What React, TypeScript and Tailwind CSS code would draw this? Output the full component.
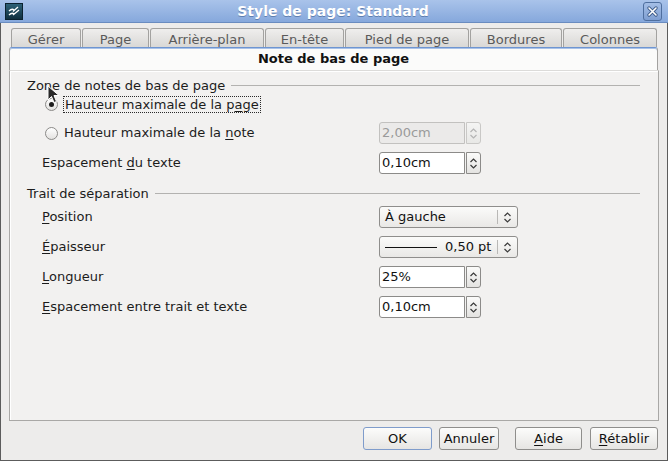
import React from 'react';

const font = "font-['DejaVu_Sans',sans-serif]";

const tabs = [
  { label: 'Gérer', w: 'w-[70px]' },
  { label: 'Page', w: 'w-[67px]' },
  { label: 'Arrière-plan', w: 'w-[114px]' },
  { label: 'En-tête', w: 'w-[79px]' },
  { label: 'Pied de page', w: 'w-[124px]' },
  { label: 'Bordures', w: 'w-[92px]' },
  { label: 'Colonnes', w: 'w-[94px]' },
];

const Chevrons = ({ disabled = false }: { disabled?: boolean }) => (
  <svg width="9" height="15" viewBox="0 0 9 15" className="block">
    <path
      d="M1.5 6 L4.5 3 L7.5 6 M1.5 9 L4.5 12 L7.5 9"
      fill="none"
      stroke={disabled ? '#b4b4b4' : '#3a3a3a'}
      strokeWidth="1.2"
    />
  </svg>
);

const SpinBox = ({ value, disabled = false }: { value: string; disabled?: boolean }) => (
  <div className="flex h-[22px]">
    <div
      className={`flex h-full w-[86px] items-center rounded-l-[3px] border pl-[2px] text-[13px] ${
        disabled ? 'border-[#c2c1bf] bg-[#ebeae9] text-[#9a9a9a]' : 'border-[#8c8b89] bg-white text-[#111]'
      }`}
    >
      {value}
    </div>
    <div
      className={`ml-px flex h-full w-[15px] items-center justify-center rounded-r-[3px] border bg-gradient-to-b ${
        disabled ? 'border-[#c9c8c6] from-[#f4f4f3] to-[#e8e8e6]' : 'border-[#8c8b89] from-[#fbfbfa] to-[#e4e3e1]'
      }`}
    >
      <Chevrons disabled={disabled} />
    </div>
  </div>
);

const Select = ({ children }: { children: React.ReactNode }) => (
  <div className="flex h-[22px] w-[139px] items-center rounded-[3px] border border-[#8f8e8c] bg-gradient-to-b from-[#fbfbfa] to-[#e9e8e6] text-[13px] text-[#111]">
    <div className="flex h-full flex-1 items-center pl-[5px]">{children}</div>
    <div className="h-[14px] w-px bg-[#b9b8b6]" />
    <div className="flex w-[19px] justify-center">
      <Chevrons />
    </div>
  </div>
);

const Radio = ({ checked }: { checked?: boolean }) => (
  <div className="flex h-[13px] w-[13px] items-center justify-center rounded-full border border-[#8b8a88] bg-gradient-to-b from-[#ffffff] to-[#e3e2e0]">
    {checked && <div className="h-[5px] w-[5px] rounded-full bg-[#1e1e1e]" />}
  </div>
);

const GroupTitle = ({ children }: { children: React.ReactNode }) => (
  <div className="flex h-[15px] items-center text-[13px] text-[#1c1c1c]">
    <span>{children}</span>
    <div className="ml-[6px] mr-[18px] h-px flex-1 bg-[#b3b2b0]" />
  </div>
);

const Row = ({ label, children, mt }: { label: React.ReactNode; children?: React.ReactNode; mt: string }) => (
  <div className={`flex h-[22px] items-center ${mt}`}>
    <div className="w-[337px] pl-[15px] text-[13px] text-[#1c1c1c]">{label}</div>
    {children}
  </div>
);

const Btn = ({ children, def = false, w }: { children: React.ReactNode; def?: boolean; w: string }) => (
  <div
    className={`flex h-[23px] ${w} items-center justify-center rounded-[3px] border bg-gradient-to-b from-[#fcfcfb] to-[#e6e5e3] text-[13px] text-[#111] ${
      def ? 'border-[#7f9ccb]' : 'border-[#8f8e8c]'
    }`}
  >
    {children}
  </div>
);

export default function App() {
  return (
    <div className={`${font} relative flex h-[461px] w-[668px] flex-col overflow-hidden bg-[#edeceb]`}>
      {/* title bar */}
      <div className="flex h-[23px] items-center border-b border-[#6a8cc0] bg-gradient-to-b from-[#a9c3ea] to-[#86a8dc] px-[5px]">
        <svg width="18" height="17" viewBox="0 0 18 17" className="block">
          <defs>
            <linearGradient id="lg" x1="0" y1="0" x2="0" y2="1">
              <stop offset="0" stopColor="#2f6379" />
              <stop offset="1" stopColor="#0f2e3d" />
            </linearGradient>
          </defs>
          <rect x="0.5" y="0.5" width="17" height="16" fill="url(#lg)" stroke="#0b2230" />
          <path d="M4 8 C6 6 8 6 9 7 M8 8.5 L13 4 M4 12 C6 10 8 10 9 11 M8 12 L14 7" stroke="#ffffff" strokeWidth="1.3" fill="none" />
        </svg>
        <div className="flex-1 text-center text-[14px] font-bold text-white [text-shadow:0_1px_0_#5f7fb0]">
          Style de page: Standard
        </div>
        <div className="mr-[1px] flex h-[19px] w-[19px] items-center justify-center rounded-[3px] border border-[#4f6f9f] bg-gradient-to-b from-[#a4bee6] to-[#7f9fd2]">
          <svg width="11" height="11" viewBox="0 0 11 11">
            <path d="M2 2 L9 9 M9 2 L2 9" stroke="#3d5a87" strokeWidth="3.2" strokeLinecap="round" />
            <path d="M2 2 L9 9 M9 2 L2 9" stroke="#ffffff" strokeWidth="1.6" strokeLinecap="round" />
          </svg>
        </div>
      </div>

      <div className="flex flex-1 flex-col border-x border-b border-[#5c5c5c] px-[8px] pb-[8px]">
        {/* tabs */}
        <div className="mt-[5px] flex h-[19px] gap-px pl-[2px]">
          {tabs.map((t) => (
            <div
              key={t.label}
              className={`${t.w} flex items-center justify-center rounded-t-[3px] border border-b-0 border-[#a3a2a0] bg-gradient-to-b from-[#efeeed] to-[#d9d8d6] pt-[3px] text-[13px] text-[#5a5a5a]`}
            >
              {t.label}
            </div>
          ))}
        </div>

        {/* active tab */}
        <div className="mr-[1px] flex h-[23px] items-center justify-center rounded-t-[3px] border border-b-0 border-[#a3a2a0] border-t-[#6e95d1] bg-[#fbfbfa] text-[13px] font-bold text-[#111] [box-shadow:inset_0_1px_0_#a9c2e8]">
          Note de bas de page
        </div>

        {/* panel */}
        <div className="flex h-[351px] flex-col border border-[#a9a8a6] border-t-[#dcdbd9] bg-[#f2f1f0] pl-[17px] pt-[7px] [box-shadow:inset_1px_1px_0_#ffffff]">
          <GroupTitle>Zone de notes de bas de page</GroupTitle>
          <div className="flex h-[22px] items-center pl-[18px]">
            <Radio checked />
            <div className="ml-[5px] border border-dotted border-[#2a2a2a] px-px text-[13px] leading-[15px] text-[#1c1c1c]">
              Hauteur maximale de la p<span className="underline underline-offset-2">a</span>ge
            </div>
          </div>
          <div className="mt-[7px] flex h-[22px] items-center">
            <div className="flex w-[352px] items-center pl-[18px]">
              <Radio />
              <div className="ml-[6px] text-[13px] text-[#1c1c1c]">
                Hauteur maximale de la <span className="underline underline-offset-2">n</span>ote
              </div>
            </div>
            <SpinBox value="2,00cm" disabled />
          </div>
          <div className="mt-[8px] flex h-[22px] items-center">
            <div className="w-[352px] pl-[15px] text-[13px] text-[#1c1c1c]">
              Espacement <span className="underline underline-offset-2">d</span>u texte
            </div>
            <SpinBox value="0,10cm" />
          </div>

          <div className="mt-[12px]">
            <GroupTitle>Trait de séparation</GroupTitle>
          </div>

          <Row mt="mt-[5px]" label={<><span className="underline underline-offset-2">P</span>osition</>}>
            <div className="ml-[15px]">
              <Select>À gauche</Select>
            </div>
          </Row>
          <Row mt="mt-[8px]" label={<><span className="underline underline-offset-2">É</span>paisseur</>}>
            <div className="ml-[15px]">
              <Select>
                <div className="flex items-center">
                  <div className="h-px w-[52px] bg-[#111]" />
                  <span className="ml-[8px]">0,50 pt</span>
                </div>
              </Select>
            </div>
          </Row>
          <Row mt="mt-[8px]" label={<><span className="underline underline-offset-2">L</span>ongueur</>}>
            <div className="ml-[15px]">
              <SpinBox value="25%" />
            </div>
          </Row>
          <Row mt="mt-[8px]" label={<><span className="underline underline-offset-2">E</span>spacement entre trait et texte</>}>
            <div className="ml-[15px]">
              <SpinBox value="0,10cm" />
            </div>
          </Row>
        </div>

        {/* buttons */}
        <div className="mt-[6px] flex justify-end pr-[1px]">
          <Btn def w="w-[69px]">OK</Btn>
          <div className="ml-[7px]">
            <Btn w="w-[60px]">Annuler</Btn>
          </div>
          <div className="ml-[16px]">
            <Btn w="w-[67px]">
              <span>
                <span className="underline underline-offset-2">A</span>ide
              </span>
            </Btn>
          </div>
          <div className="ml-[8px]">
            <Btn w="w-[68px]">
              <span>
                <span className="underline underline-offset-2">R</span>établir
              </span>
            </Btn>
          </div>
        </div>
      </div>

      {/* mouse cursor */}
      <svg width="14" height="20" viewBox="0 0 14 20" className="absolute left-[47px] top-[85px]">
        <path d="M1 1 L1 15 L4.5 11.5 L7 17.5 L9.5 16.5 L7 10.5 L12 10.5 Z" fill="#2a2a2a" stroke="#ffffff" strokeWidth="1" strokeLinejoin="round" />
      </svg>
    </div>
  );
}
